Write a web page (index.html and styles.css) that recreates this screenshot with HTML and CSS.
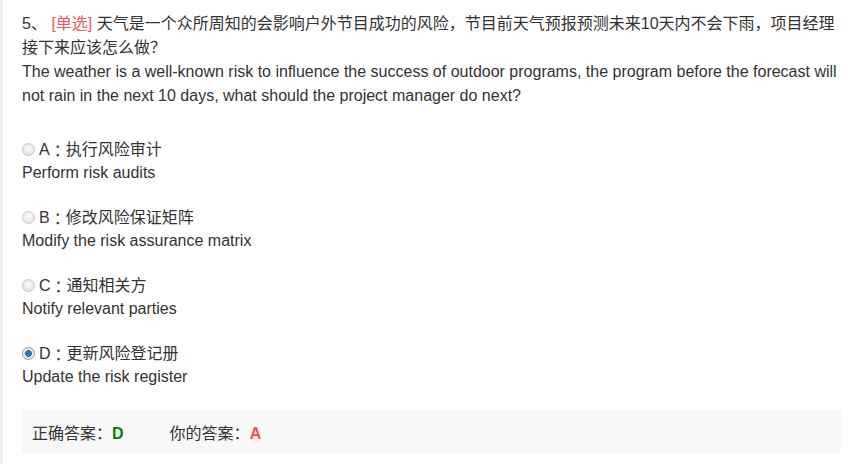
FILE: index.html
```html
<!DOCTYPE html>
<html lang="zh-CN">
<head>
<meta charset="utf-8">
<link rel="stylesheet" href="styles.css">
</head>
<body>
<div class="page">
  <div class="question">
    <div class="title">5<span class="p">、</span> <span class="tag">[单选]</span> 天气是一个众所周知的会影响户外节目成功的风险<span class="p">，</span>节目前天气预报预测未来10天内不会下雨<span class="p">，</span>项目经理接下来应该怎么做<span class="p">？</span></div>
    <div class="title-en">The weather is a well-known risk to influence the success of outdoor programs, the program before the forecast will not rain in the next 10 days, what should the project manager do next?</div>
  </div>
  <div class="options">
    <div class="option">
      <div class="opt-label"><span class="radio"></span>A<span class="p">：</span>执行风险审计</div>
      <div class="opt-en">Perform risk audits</div>
    </div>
    <div class="option">
      <div class="opt-label"><span class="radio"></span>B<span class="p">：</span>修改风险保证矩阵</div>
      <div class="opt-en">Modify the risk assurance matrix</div>
    </div>
    <div class="option">
      <div class="opt-label"><span class="radio"></span>C<span class="p">：</span>通知相关方</div>
      <div class="opt-en">Notify relevant parties</div>
    </div>
    <div class="option">
      <div class="opt-label"><span class="radio checked"></span>D<span class="p">：</span>更新风险登记册</div>
      <div class="opt-en">Update the risk register</div>
    </div>
  </div>
  <div class="answer">
    <span class="ans-item">正确答案<span class="p">：</span><b class="right">D</b></span>
    <span class="ans-item">你的答案<span class="p">：</span><b class="wrong">A</b></span>
  </div>
  <div class="divider"></div>
</div>
</body>
</html>
```
FILE: styles.css
```css
html, body {
  margin: 0;
  padding: 0;
  background: #fff;
}
body {
  font-family: "Liberation Sans", Arial, "Noto Sans CJK SC", sans-serif;
  font-size: 16px;
  color: #333;
}
.page {
  border-left: 3px solid #f0f0f0;
  padding: 12px 21px 0 19px;
  min-height: 452px;
}
.question {
  line-height: 24px;
}
.p {
  font-family: "Noto Sans CJK TC", "Noto Sans CJK SC", sans-serif;
  line-height: 0;
}
.tag {
  color: #f0585a;
}
.options {
  margin-top: 30px;
}
.option {
  line-height: 23px;
  margin-bottom: 22px;
}
.opt-label {
  display: flex;
  align-items: center;
  height: 23px;
}
.radio {
  width: 11px;
  height: 11px;
  border-radius: 50%;
  border: 1px solid #c8c8c8;
  background: radial-gradient(circle at 50% 40%, #fafafa 0%, #e6e6e6 70%, #d8d8d8 100%);
  margin-right: 4px;
  flex: none;
  box-sizing: content-box;
}
.radio.checked {
  border-color: #9a9a9a;
  background: radial-gradient(circle at 50% 50%, #1d6fb0 0%, #2a86c8 28%, #0a4f86 38%, #dcdcdc 45%, #f4f4f4 75%, #d0d0d0 100%);
}
.answer {
  margin-top: 21px;
  background: #f8f8f8;
  height: 43px;
  display: flex;
  align-items: center;
  padding-left: 10px;
  gap: 46px;
}
.ans-item b {
  font-weight: bold;
}
.right {
  color: #008000;
}
.wrong {
  color: #f24d57;
}
.divider {
  margin-top: 11px;
  border-top: 1px solid #eeeeee;
}
```
